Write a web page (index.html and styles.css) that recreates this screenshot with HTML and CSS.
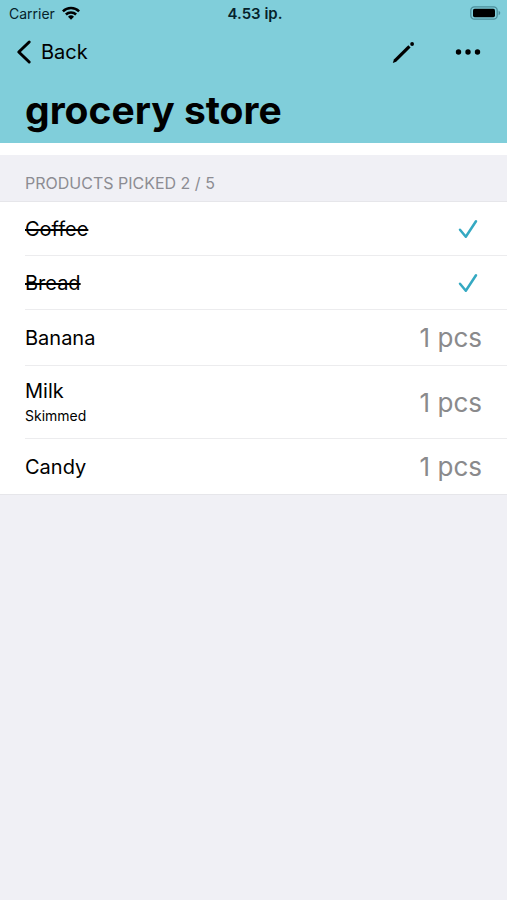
FILE: index.html
```html
<!DOCTYPE html>
<html lang="en">
<head>
<meta charset="utf-8">
<meta name="viewport" content="width=device-width, initial-scale=1">
<title>grocery store</title>
<link rel="stylesheet" href="styles.css">
</head>
<body>
<header class="header">
  <div class="status">
    <div class="status-left">
      <span>Carrier</span>
      <svg class="wifi" viewBox="0 0 18 14" width="18" height="14" aria-hidden="true">
        <g fill="none" stroke="currentColor" stroke-width="2.5">
          <path d="M0.9 5.3a11.5 11.5 0 0 1 16.2 0"/>
          <path d="M3.9 8.5a7.2 7.2 0 0 1 10.2 0"/>
        </g>
        <path d="M9 13.8 6 10.8a4.3 4.3 0 0 1 6 0z" fill="currentColor"/>
      </svg>
    </div>
    <time class="clock">4.53 ip.</time>
    <div class="status-right">
      <svg viewBox="0 0 31 14" width="31" height="14" aria-hidden="true">
        <rect x="0.8" y="0.8" width="26.4" height="12.4" rx="3.6" fill="none" stroke="#4b8e9b" stroke-width="1.3"/>
        <rect x="3" y="2.8" width="22" height="8.4" rx="1.6" fill="#000"/>
        <path d="M28.6 4.8c2.2.8 2.2 3.6 0 4.4z" fill="#4b8e9b"/>
      </svg>
    </div>
  </div>
  <nav class="toolbar">
    <a class="back" href="#">
      <svg viewBox="0 0 16 26" width="16" height="26" aria-hidden="true">
        <path d="M13.2 3 2.8 13l10.4 10" fill="none" stroke="currentColor" stroke-width="3" stroke-linecap="round" stroke-linejoin="round"/>
      </svg>
      <span>Back</span>
    </a>
    <div class="actions">
      <button type="button" aria-label="Edit list">
        <svg viewBox="0 0 26 26" width="26" height="26" aria-hidden="true">
          <path d="M3.9 20.4 18.3 6.2l2.3 2.3L6.2 22.7l-3.4 1.2z" fill="currentColor"/>
          <circle cx="22.1" cy="5" r="1.9" fill="currentColor"/>
        </svg>
      </button>
      <button type="button" aria-label="More">
        <svg viewBox="0 0 26 26" width="26" height="26" aria-hidden="true">
          <g fill="currentColor"><circle cx="3.5" cy="13" r="2.7"/><circle cx="13" cy="13" r="2.7"/><circle cx="22.5" cy="13" r="2.7"/></g>
        </svg>
      </button>
    </div>
  </nav>
  <h1>grocery store</h1>
</header>
<main>
  <h2>PRODUCTS PICKED 2 / 5</h2>
  <ul class="products">
    <li>
      <div class="name"><s>Coffee</s></div>
      <svg class="check" viewBox="0 0 20 20" width="20" height="20" role="img" aria-label="Picked">
        <path d="M2 10.8 7.8 17.8 18 2.2" fill="none" stroke="currentColor" stroke-width="2.5" stroke-linecap="round" stroke-linejoin="round"/>
      </svg>
    </li>
    <li>
      <div class="name"><s>Bread</s></div>
      <svg class="check" viewBox="0 0 20 20" width="20" height="20" role="img" aria-label="Picked">
        <path d="M2 10.8 7.8 17.8 18 2.2" fill="none" stroke="currentColor" stroke-width="2.5" stroke-linecap="round" stroke-linejoin="round"/>
      </svg>
    </li>
    <li>
      <div class="name">Banana</div>
      <span class="amount">1 pcs</span>
    </li>
    <li>
      <div class="name">Milk<small>Skimmed</small></div>
      <span class="amount">1 pcs</span>
    </li>
    <li>
      <div class="name">Candy</div>
      <span class="amount">1 pcs</span>
    </li>
  </ul>
</main>
</body>
</html>
```
FILE: styles.css
```css
* {
  box-sizing: border-box;
}

body {
  margin: 0;
  min-height: 100vh;
  background: #f0f0f5;
  color: #000;
  font-family: Inter, "Liberation Sans", sans-serif;
}

.header {
  background: #80ceda;
  border-bottom: 12px solid #fff;
}

.status {
  display: grid;
  grid-template-columns: 1fr auto 1fr;
  align-items: center;
  height: 26px;
  padding: 0 6px 0 9px;
  font-size: 14px;
  color: #06222a;
}

.status-left {
  display: flex;
  align-items: center;
  gap: 7px;
}

.wifi {
  color: #000;
}

.clock {
  font-size: 15px;
  font-weight: 600;
}

.status-right {
  display: flex;
  justify-content: flex-end;
}

.toolbar {
  display: flex;
  justify-content: space-between;
  align-items: center;
  height: 52px;
  padding: 0 26px 0 16px;
}

.back {
  display: flex;
  align-items: center;
  gap: 9px;
  color: #000;
  font-size: 20px;
  text-decoration: none;
}

.actions {
  display: flex;
  gap: 39px;
}

.actions button {
  display: flex;
  padding: 0;
  border: 0;
  background: none;
  color: #000;
}

h1 {
  margin: 0;
  padding: 8px 25px 9px;
  font-size: 39px;
  line-height: 48px;
  font-weight: 700;
}

h2 {
  margin: 0;
  padding: 18px 25px 8px;
  font-size: 16px;
  line-height: 20px;
  font-weight: 400;
  color: #8c8c92;
}

.products {
  margin: 0;
  padding: 0 0 0 25px;
  list-style: none;
  background: #fff;
  border-top: 1px solid #e6e6ea;
  border-bottom: 1px solid #e6e6ea;
}

.products li {
  display: flex;
  justify-content: space-between;
  align-items: center;
  min-height: 53px;
  padding: 11px 25px 11px 0;
}

.products li + li {
  min-height: 54px;
  border-top: 1px solid #ececee;
}

.name {
  font-size: 20px;
  line-height: 28px;
}

.name s {
  text-decoration-thickness: 2px;
}

.name small {
  display: block;
  font-size: 14px;
  line-height: 22px;
}

.check {
  margin-right: 4px;
  color: #35a9c2;
}

.amount {
  font-size: 26px;
  line-height: 33px;
  color: #8a8a8c;
}
```
